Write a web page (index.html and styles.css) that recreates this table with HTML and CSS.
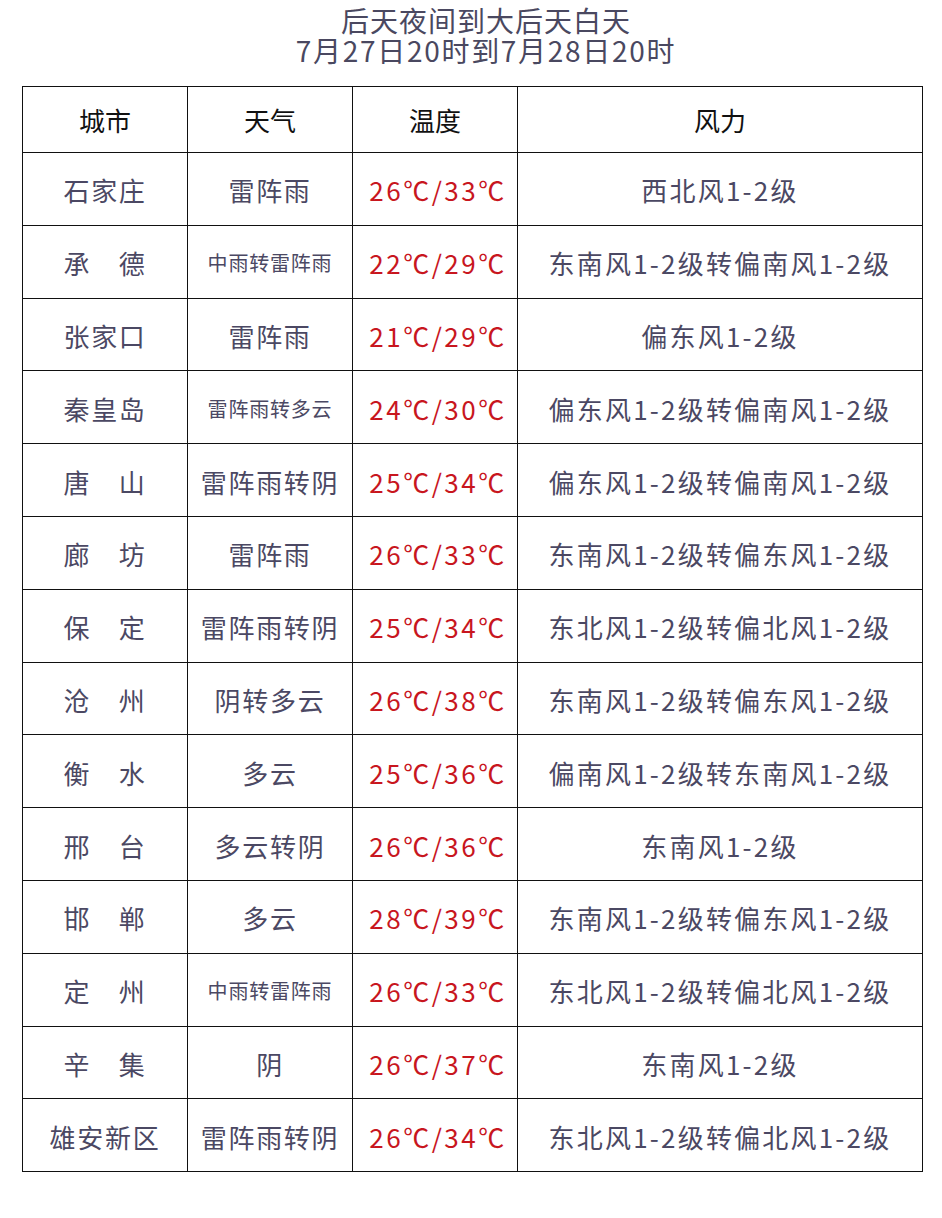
FILE: index.html
```html
<!DOCTYPE html>
<html lang="zh-CN">
<head>
<meta charset="utf-8">
<link rel="stylesheet" href="styles.css">
</head>
<body>
<div class="page">
  <div class="title">
    <div class="l1">后天夜间到大后天白天</div>
    <div class="l2">7月27日20时到7月28日20时</div>
  </div>
  <table class="wx">
    <colgroup>
      <col class="c1"><col class="c2"><col class="c3"><col class="c4">
    </colgroup>
    <thead>
      <tr><th>城市</th><th>天气</th><th>温度</th><th>风力</th></tr>
    </thead>
    <tbody>
      <tr><td>石家庄</td><td>雷阵雨</td><td class="t">26℃/33℃</td><td class="w">西北风1-2级</td></tr>
      <tr><td>承　德</td><td class="sm">中雨转雷阵雨</td><td class="t">22℃/29℃</td><td class="w">东南风1-2级转偏南风1-2级</td></tr>
      <tr><td>张家口</td><td>雷阵雨</td><td class="t">21℃/29℃</td><td class="w">偏东风1-2级</td></tr>
      <tr><td>秦皇岛</td><td class="sm">雷阵雨转多云</td><td class="t">24℃/30℃</td><td class="w">偏东风1-2级转偏南风1-2级</td></tr>
      <tr><td>唐　山</td><td>雷阵雨转阴</td><td class="t">25℃/34℃</td><td class="w">偏东风1-2级转偏南风1-2级</td></tr>
      <tr><td>廊　坊</td><td>雷阵雨</td><td class="t">26℃/33℃</td><td class="w">东南风1-2级转偏东风1-2级</td></tr>
      <tr><td>保　定</td><td>雷阵雨转阴</td><td class="t">25℃/34℃</td><td class="w">东北风1-2级转偏北风1-2级</td></tr>
      <tr><td>沧　州</td><td>阴转多云</td><td class="t">26℃/38℃</td><td class="w">东南风1-2级转偏东风1-2级</td></tr>
      <tr><td>衡　水</td><td>多云</td><td class="t">25℃/36℃</td><td class="w">偏南风1-2级转东南风1-2级</td></tr>
      <tr><td>邢　台</td><td>多云转阴</td><td class="t">26℃/36℃</td><td class="w">东南风1-2级</td></tr>
      <tr><td>邯　郸</td><td>多云</td><td class="t">28℃/39℃</td><td class="w">东南风1-2级转偏东风1-2级</td></tr>
      <tr><td>定　州</td><td class="sm">中雨转雷阵雨</td><td class="t">26℃/33℃</td><td class="w">东北风1-2级转偏北风1-2级</td></tr>
      <tr><td>辛　集</td><td>阴</td><td class="t">26℃/37℃</td><td class="w">东南风1-2级</td></tr>
      <tr><td>雄安新区</td><td>雷阵雨转阴</td><td class="t">26℃/34℃</td><td class="w">东北风1-2级转偏北风1-2级</td></tr>
    </tbody>
  </table>
</div>
</body>
</html>
```
FILE: styles.css
```css
html, body {
  margin: 0;
  padding: 0;
  background: #ffffff;
}
.page {
  width: 942px;
  font-family: "Noto Sans CJK SC", "Noto Sans", sans-serif;
  color: #4b4863;
}
.title {
  padding: 5px 0 0 30px;
  text-align: center;
  font-size: 28px;
  line-height: 30px;
  color: #4a4860;
}
.title .l1 { letter-spacing: 1px; }
.title .l2 { letter-spacing: 1.7px; }
.wx {
  margin: 21px 0 0 22px;
  width: 901px;
  border-collapse: collapse;
  table-layout: fixed;
}
.c1, .c2, .c3 { width: 165px; }
.wx th, .wx td {
  border: 1.5px solid #111;
  text-align: center;
  vertical-align: middle;
  padding: 0;
  white-space: nowrap;
}
.wx th {
  height: 65px;
  font-size: 26px;
  font-weight: normal;
  color: #111;
}
.wx td {
  height: 69.8px;
  font-size: 26px;
  letter-spacing: 1.7px;
  padding-top: 2px;
}
.wx td.sm {
  font-size: 20px;
  letter-spacing: 0.8px;
}
.wx td.t {
  color: #c8161e;
  letter-spacing: 2.5px;
  padding-left: 6px;
}
.wx td.w {
  letter-spacing: 2.2px;
}
```
